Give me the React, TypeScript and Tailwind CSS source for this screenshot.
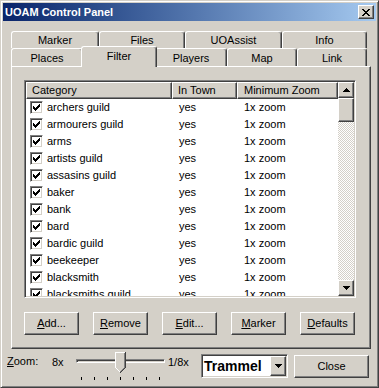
import React from "react";

const raised =
  "border border-t-white border-l-white border-r-[#404040] border-b-[#404040] shadow-[inset_-1px_-1px_#808080]";
const sunken =
  "border border-t-[#808080] border-l-[#808080] border-r-white border-b-white shadow-[inset_1px_1px_#404040,inset_-1px_-1px_#d4d0c8]";
const tabBase =
  "border-t border-l border-r border-t-white border-l-white border-r-[#404040] shadow-[inset_-1px_0_#808080] rounded-t-[3px] flex justify-center bg-[#d4d0c8]";

const rows = [
  "archers guild",
  "armourers guild",
  "arms",
  "artists guild",
  "assasins guild",
  "baker",
  "bank",
  "bard",
  "bardic guild",
  "beekeeper",
  "blacksmith",
  "blacksmiths guild",
];

function CheckBox() {
  return (
    <div className={`w-[13px] h-[13px] shrink-0 bg-white ${sunken} flex items-center justify-center`}>
      <svg width="7" height="7" viewBox="0 0 7 7" shapeRendering="crispEdges">
        <path
          d="M0 2h1v3H0zM1 3h1v3H1zM2 4h1v3H2zM3 3h1v3H3zM4 2h1v3H4zM5 1h1v3H5zM6 0h1v3H6z"
          fill="#000"
        />
      </svg>
    </div>
  );
}

function Tab({ className, children }: { className: string; children: React.ReactNode }) {
  return <div className={`${tabBase} ${className}`}>{children}</div>;
}

function Btn({ className, children }: { className: string; children: React.ReactNode }) {
  return (
    <div className={`${raised} bg-[#d4d0c8] flex items-center justify-center ${className}`}>
      <span>{children}</span>
    </div>
  );
}

function Arrow({ up }: { up?: boolean }) {
  return (
    <svg width="7" height="4" viewBox="0 0 7 4" shapeRendering="crispEdges">
      {up ? (
        <path d="M3 0h1v1H3zM2 1h3v1H2zM1 2h5v1H1zM0 3h7v1H0z" fill="#000" />
      ) : (
        <path d="M0 0h7v1H0zM1 1h5v1H1zM2 2h3v1H2zM3 3h1v1H3z" fill="#000" />
      )}
    </svg>
  );
}

export default function App() {
  return (
    <div className="w-[379px] h-[388px] bg-[#d4d0c8] border border-t-[#d4d0c8] border-l-[#d4d0c8] border-r-[#404040] border-b-[#404040] shadow-[inset_1px_1px_#ffffff,inset_-1px_-1px_#808080] p-[2px] flex flex-col font-['Liberation_Sans',Arial,sans-serif] text-[11px] leading-[13px] text-black overflow-hidden">
      {/* Title bar */}
      <div className="h-[18px] shrink-0 flex items-center bg-linear-to-r from-[#0a246a] to-[#a6caf0] pl-[2px] pr-[2px]">
        <span className="font-bold text-white flex-1">UOAM Control Panel</span>
        <div className={`w-[16px] h-[14px] bg-[#d4d0c8] ${raised} flex items-center justify-center`}>
          <svg width="8" height="7" viewBox="0 0 8 7" shapeRendering="crispEdges">
            <path
              d="M0 0h2v1H0zM6 0h2v1H6zM1 1h2v1H1zM5 1h2v1H5zM2 2h4v1H2zM3 3h2v1H3zM2 4h4v1H2zM1 5h2v1H1zM5 5h2v1H5zM0 6h2v1H0zM6 6h2v1H6z"
              fill="#000"
            />
          </svg>
        </div>
      </div>

      {/* Tab control */}
      <div className="mt-[10px] ml-[8px] w-[360px] flex flex-col">
        <div className="flex h-[17px]">
          <Tab className="w-[88px] h-[17px] pt-[2px]">Marker</Tab>
          <Tab className="w-[86px] h-[17px] pt-[2px]">Files</Tab>
          <Tab className="w-[97px] h-[17px] pt-[2px]">UOAssist</Tab>
          <Tab className="w-[85px] h-[17px] pt-[2px]">Info</Tab>
        </div>
        <div className="flex h-[18px] items-start">
          <Tab className="w-[72px] h-[18px] pt-[3px]">Places</Tab>
          <Tab className="w-[76px] h-[21px] -mx-[2px] -mt-[2px] pt-[3px] relative z-10">Filter</Tab>
          <Tab className="w-[72px] h-[18px] pt-[3px]">Players</Tab>
          <Tab className="w-[70px] h-[18px] pt-[3px]">Map</Tab>
          <Tab className="w-[70px] h-[18px] pt-[3px]">Link</Tab>
        </div>

        {/* Panel */}
        <div className="h-[283px] border border-t-white border-l-white border-r-[#404040] border-b-[#404040] shadow-[inset_-1px_-1px_#808080] pt-[13px] pl-[12px] flex flex-col">
          {/* List view */}
          <div className={`w-[332px] h-[218px] bg-white ${sunken} p-[1px] flex overflow-hidden`}>
            <div className="flex-1 flex flex-col overflow-hidden">
              <div className="flex h-[17px] shrink-0">
                <div className={`w-[146px] ${raised} bg-[#d4d0c8] pl-[5px] flex items-center`}>Category</div>
                <div className={`w-[65px] ${raised} bg-[#d4d0c8] pl-[5px] flex items-center`}>In Town</div>
                <div className={`flex-1 ${raised} bg-[#d4d0c8] pl-[6px] flex items-center`}>Minimum Zoom</div>
              </div>
              {rows.map((r) => (
                <div key={r} className="flex h-[17px] shrink-0 items-center">
                  <div className="w-[146px] pl-[4px] flex items-center gap-[4px]">
                    <CheckBox />
                    <span className="whitespace-nowrap">{r}</span>
                  </div>
                  <div className="w-[65px] pl-[7px]">yes</div>
                  <div className="flex-1 pl-[7px]">1x zoom</div>
                </div>
              ))}
            </div>
            {/* Scrollbar */}
            <div className="w-[16px] flex flex-col">
              <div className={`h-[16px] shrink-0 ${raised} bg-[#d4d0c8] flex items-center justify-center`}>
                <Arrow up />
              </div>
              <div className={`h-[24px] shrink-0 ${raised} bg-[#d4d0c8]`} />
              <div className="flex-1 bg-[image:repeating-conic-gradient(#ffffff_0_25%,#d4d0c8_0_50%)] bg-[length:2px_2px]" />
              <div className={`h-[16px] shrink-0 ${raised} bg-[#d4d0c8] flex items-center justify-center`}>
                <Arrow />
              </div>
            </div>
          </div>

          {/* Buttons */}
          <div className="mt-[14px] flex gap-[14px]">
            <Btn className="w-[55px] h-[23px]">
              <span className="underline">A</span>dd...
            </Btn>
            <Btn className="w-[55px] h-[23px]">
              <span className="underline">R</span>emove
            </Btn>
            <Btn className="w-[55px] h-[23px]">
              <span className="underline">E</span>dit...
            </Btn>
            <Btn className="w-[55px] h-[23px]">
              <span className="underline">M</span>arker
            </Btn>
            <Btn className="w-[55px] h-[23px]">
              <span className="underline">D</span>efaults
            </Btn>
          </div>
        </div>
      </div>

      {/* Bottom row */}
      <div className="mt-[3px] flex items-start">
        <div className="ml-[4px] w-[45px] mt-[3px]">
          <span className="underline">Z</span>oom:
        </div>
        <div className="w-[22px] mt-[4px]">8x</div>
        <div className="w-[93px] h-[30px] relative">
          <div className={`absolute left-[2px] top-[7px] w-[89px] h-[4px] ${sunken}`} />
          <svg
            className="absolute left-[41px] top-0"
            width="11"
            height="21"
            viewBox="0 0 11 21"
            shapeRendering="crispEdges"
          >
            <path d="M0 0H11V16L5.5 21L0 16Z" fill="#d4d0c8" />
            <path d="M0 0h10v1H0zM0 0h1v16H0z" fill="#ffffff" />
            <path d="M1 16h1v1H1zM2 17h1v1H2zM3 18h1v1H3zM4 19h1v1H4z" fill="#ffffff" />
            <path d="M10 0h1v16h-1zM9 16h1v1H9zM8 17h1v1H8zM7 18h1v1H7zM6 19h1v1H6zM5 20h1v1H5z" fill="#404040" />
            <path d="M9 1h1v15H9zM8 16h1v1H8zM7 17h1v1H7zM6 18h1v1H6zM5 19h1v1H5z" fill="#808080" />
          </svg>
          <div className="absolute top-[25px] left-[7px] w-px h-[3px] bg-black" />
          <div className="absolute top-[25px] left-[20px] w-px h-[3px] bg-black" />
          <div className="absolute top-[25px] left-[33px] w-px h-[3px] bg-black" />
          <div className="absolute top-[25px] left-[46px] w-px h-[3px] bg-black" />
          <div className="absolute top-[25px] left-[59px] w-px h-[3px] bg-black" />
          <div className="absolute top-[25px] left-[72px] w-px h-[3px] bg-black" />
          <div className="absolute top-[25px] left-[85px] w-px h-[3px] bg-black" />
        </div>
        <div className="w-[34px] mt-[4px] pl-px">1/8x</div>
        <div className={`w-[87px] h-[24px] mt-[2px] bg-white ${sunken} p-px flex items-center`}>
          <span className="flex-1 pl-px font-bold text-[14px] leading-[16px]">Trammel</span>
          <div className={`w-[16px] h-[20px] ${raised} bg-[#d4d0c8] flex items-center justify-center`}>
            <Arrow />
          </div>
        </div>
        <Btn className="ml-[6px] mt-[3px] w-[75px] h-[23px]">Close</Btn>
      </div>
    </div>
  );
}
